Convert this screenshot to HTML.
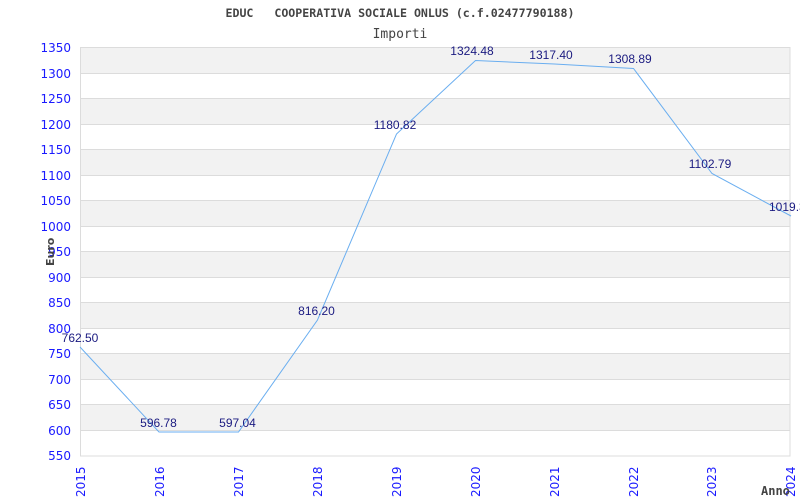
<!DOCTYPE html>
<html><head><style>html,body{margin:0;padding:0;background:#fff;width:800px;height:500px;overflow:hidden}</style></head>
<body>
<svg width="800" height="500" xmlns="http://www.w3.org/2000/svg">
<g fill="#f2f2f2">
<rect x="80.5" y="47.5" width="709.5" height="25.5"/>
<rect x="80.5" y="98.5" width="709.5" height="25.5"/>
<rect x="80.5" y="149.5" width="709.5" height="25.5"/>
<rect x="80.5" y="200.5" width="709.5" height="25.5"/>
<rect x="80.5" y="251.5" width="709.5" height="25.5"/>
<rect x="80.5" y="302.5" width="709.5" height="25.5"/>
<rect x="80.5" y="353.5" width="709.5" height="25.5"/>
<rect x="80.5" y="404.5" width="709.5" height="25.5"/>
</g>
<g stroke="#dcdcdc" stroke-width="1">
<line x1="80" y1="73.5" x2="790" y2="73.5"/><line x1="80" y1="98.5" x2="790" y2="98.5"/>
<line x1="80" y1="124.5" x2="790" y2="124.5"/><line x1="80" y1="149.5" x2="790" y2="149.5"/>
<line x1="80" y1="175.5" x2="790" y2="175.5"/><line x1="80" y1="200.5" x2="790" y2="200.5"/>
<line x1="80" y1="226.5" x2="790" y2="226.5"/><line x1="80" y1="251.5" x2="790" y2="251.5"/>
<line x1="80" y1="277.5" x2="790" y2="277.5"/><line x1="80" y1="302.5" x2="790" y2="302.5"/>
<line x1="80" y1="328.5" x2="790" y2="328.5"/><line x1="80" y1="353.5" x2="790" y2="353.5"/>
<line x1="80" y1="379.5" x2="790" y2="379.5"/><line x1="80" y1="404.5" x2="790" y2="404.5"/>
<line x1="80" y1="430.5" x2="790" y2="430.5"/>
<rect x="80.5" y="47.5" width="709.5" height="408.5" fill="none"/>
</g>
<polyline fill="none" stroke="#6aaef0" stroke-width="1" points="80,347 159,432 238.5,432 317.5,320 396.5,134 475.5,60.5 554.5,64 633.5,68.5 712,173.5 791,216"/>
<g font-family="Liberation Sans, sans-serif" font-size="12" fill="#1a1a80" text-anchor="middle">
<text x="80" y="342">762.50</text>
<text x="158.5" y="427">596.78</text>
<text x="237.5" y="427">597.04</text>
<text x="316.5" y="315">816.20</text>
<text x="395" y="129">1180.82</text>
<text x="472" y="55">1324.48</text>
<text x="551" y="59">1317.40</text>
<text x="630" y="63">1308.89</text>
<text x="710" y="168">1102.79</text>
<text x="769" y="211" text-anchor="start">1019.3</text>
</g>
<g font-family="DejaVu Sans, sans-serif" font-size="12" fill="#1a1aff" text-anchor="end">
<text x="71" y="52">1350</text><text x="71" y="78">1300</text><text x="71" y="103">1250</text>
<text x="71" y="129">1200</text><text x="71" y="154">1150</text><text x="71" y="180">1100</text>
<text x="71" y="205">1050</text><text x="71" y="231">1000</text><text x="71" y="256">950</text>
<text x="71" y="282">900</text><text x="71" y="307">850</text><text x="71" y="333">800</text>
<text x="71" y="358">750</text><text x="71" y="384">700</text><text x="71" y="409">650</text>
<text x="71" y="435">600</text><text x="71" y="460">550</text>
</g>
<g font-family="DejaVu Sans, sans-serif" font-size="12" fill="#1a1aff">
<text transform="translate(85,497) rotate(-90)">2015</text>
<text transform="translate(164,497) rotate(-90)">2016</text>
<text transform="translate(243,497) rotate(-90)">2017</text>
<text transform="translate(322,497) rotate(-90)">2018</text>
<text transform="translate(401,497) rotate(-90)">2019</text>
<text transform="translate(480,497) rotate(-90)">2020</text>
<text transform="translate(559,497) rotate(-90)">2021</text>
<text transform="translate(638,497) rotate(-90)">2022</text>
<text transform="translate(716,497) rotate(-90)">2023</text>
<text transform="translate(795,497) rotate(-90)">2024</text>
</g>
<text x="400" y="17" text-anchor="middle" font-family="DejaVu Sans Mono, monospace" font-size="11.6" font-weight="bold" fill="#444" xml:space="preserve">EDUC&#160;&#160;&#160;COOPERATIVA SOCIALE ONLUS (c.f.02477790188)</text>
<text x="400" y="38" text-anchor="middle" font-family="DejaVu Sans Mono, monospace" font-size="13" fill="#444">Importi</text>
<text transform="translate(54,266) rotate(-90)" font-family="DejaVu Sans, sans-serif" font-size="11" font-weight="bold" fill="#444">Euro</text>
<text x="761" y="495" font-family="DejaVu Sans Mono, monospace" font-size="12" font-weight="bold" fill="#444">Anno</text>
</svg>
</body></html>
